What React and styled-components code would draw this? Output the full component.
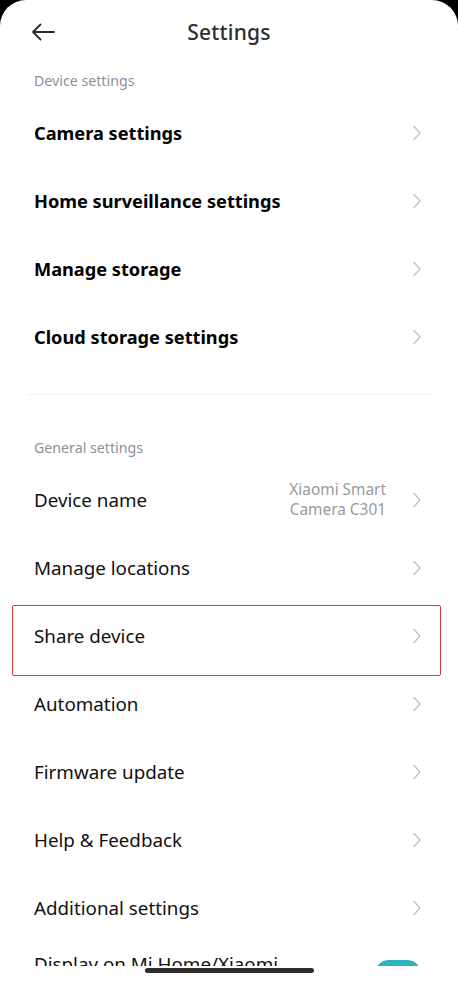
import React from "react";
import styled, { createGlobalStyle } from "styled-components";

const GlobalStyle = createGlobalStyle`
    html, body {
        margin: 0;
        padding: 0;
        background: #000;
        font-family: "Noto Sans", "Open Sans", sans-serif;
    }
`;

const deviceRows = [
    "Camera settings",
    "Home surveillance settings",
    "Manage storage",
    "Cloud storage settings",
];

const generalRows = [
    { title: "Device name", value: ["Xiaomi Smart", "Camera C301"] },
    { title: "Manage locations" },
    { title: "Share device", highlighted: true },
    { title: "Automation" },
    { title: "Firmware update" },
    { title: "Help & Feedback" },
    { title: "Additional settings" },
];

const Chevron = () => (
    <ChevronBox width="10" height="16" viewBox="0 0 10 16">
        <path d="M2 1.5 L8 8 L2 14.5" fill="none" stroke="#c2c2c2" strokeWidth="1.4" strokeLinecap="round" strokeLinejoin="round" />
    </ChevronBox>
);

const BackArrow = () => (
    <svg width="24" height="18" viewBox="0 0 24 18">
        <path d="M23 9 H2 M9.5 1.5 L2 9 L9.5 16.5" fill="none" stroke="#2b2b2b" strokeWidth="1.8" strokeLinecap="round" strokeLinejoin="round" />
    </svg>
);

const App = () => {
    return (
        <>
        <GlobalStyle />
        <Screen>
            <Sheet>
                <Header>
                    <BackButton><BackArrow /></BackButton>
                    <Title>Settings</Title>
                </Header>

                <SectionTitle>Device settings</SectionTitle>
                {deviceRows.map((val, idx) => (
                    <Row key={idx}>
                        <RowLabel bold>{val}</RowLabel>
                        <Chevron />
                    </Row>
                ))}

                <Divider />

                <SectionTitle top={44}>General settings</SectionTitle>
                {generalRows.map((val, idx) => (
                    <Row key={idx} highlighted={val.highlighted}>
                        <RowLabel>{val.title}</RowLabel>
                        {val.value && (
                            <RowValue>
                                {val.value.map((line) => <div key={line}>{line}</div>)}
                            </RowValue>
                        )}
                        <Chevron />
                    </Row>
                ))}

                <Row>
                    <RowLabel narrow>Display on Mi Home/Xiaomi Home app</RowLabel>
                    <Toggle />
                </Row>
            </Sheet>
            <NavBar>
                <HomeIndicator />
            </NavBar>
        </Screen>
        </>
    );
};

const Screen = styled.div`
    width: 458px;
    height: 983px;
    display: flex;
    flex-direction: column;
    background: #fff;
    border-radius: 26px 26px 0 0;
    overflow: hidden;
`;

const Sheet = styled.div`
    flex: 1;
    overflow: hidden;
    display: flex;
    flex-direction: column;
`;

const Header = styled.div`
    height: 64px;
    flex-shrink: 0;
    display: flex;
    align-items: center;
    justify-content: center;
    position: relative;
`;

const BackButton = styled.div`
    position: absolute;
    left: 31px;
    top: 23px;
    display: flex;
`;

const Title = styled.div`
    font-size: 21px;
    font-weight: 500;
    color: #2e2e2e;
    letter-spacing: 0.2px;
`;

const SectionTitle = styled.div`
    flex-shrink: 0;
    padding: ${(p) => (p.top || 8)}px 34px 9px;
    font-size: 14.2px;
    line-height: 18px;
    color: #8b8f98;
`;

const Row = styled.div`
    flex-shrink: 0;
    height: 68px;
    padding: 0 36px 0 34px;
    display: flex;
    align-items: center;
    gap: 20px;
    position: relative;

    ${(p) => p.highlighted && `
        &::after {
            content: "";
            position: absolute;
            left: 12px;
            right: 17px;
            top: 3px;
            bottom: -6px;
            border: 1.5px solid #dc3b36;
            border-radius: 2px;
        }
    `}
`;

const RowLabel = styled.div`
    flex: 1;
    font-size: ${(p) => (p.bold ? 18.2 : 18.8)}px;
    line-height: 24px;
    font-weight: ${(p) => (p.bold ? 700 : 400)};
    color: ${(p) => (p.bold ? "#000" : "#111")};
    ${(p) => p.narrow && "max-width: 270px;"}
`;

const RowValue = styled.div`
    text-align: right;
    font-size: 15.4px;
    line-height: 20px;
    color: #9a9a9a;
    margin-right: 6px;
`;

const ChevronBox = styled.svg`
    flex-shrink: 0;
`;

const Divider = styled.div`
    flex-shrink: 0;
    height: 1px;
    margin: 23px 28px 0;
    background: #f1f1f1;
`;

const Toggle = styled.div`
    width: 46px;
    height: 28px;
    flex-shrink: 0;
    border-radius: 14px;
    background: #2fb3bb;
    margin-left: auto;
    margin-bottom: 4px;
    margin-right: 1px;
`;

const NavBar = styled.div`
    height: 15px;
    flex-shrink: 0;
    display: flex;
    justify-content: center;
    padding-top: 2px;
    background: #fff;
`;

const HomeIndicator = styled.div`
    width: 169px;
    height: 5px;
    border-radius: 3px;
    background: #2e2e2e;
`;

export default App;
